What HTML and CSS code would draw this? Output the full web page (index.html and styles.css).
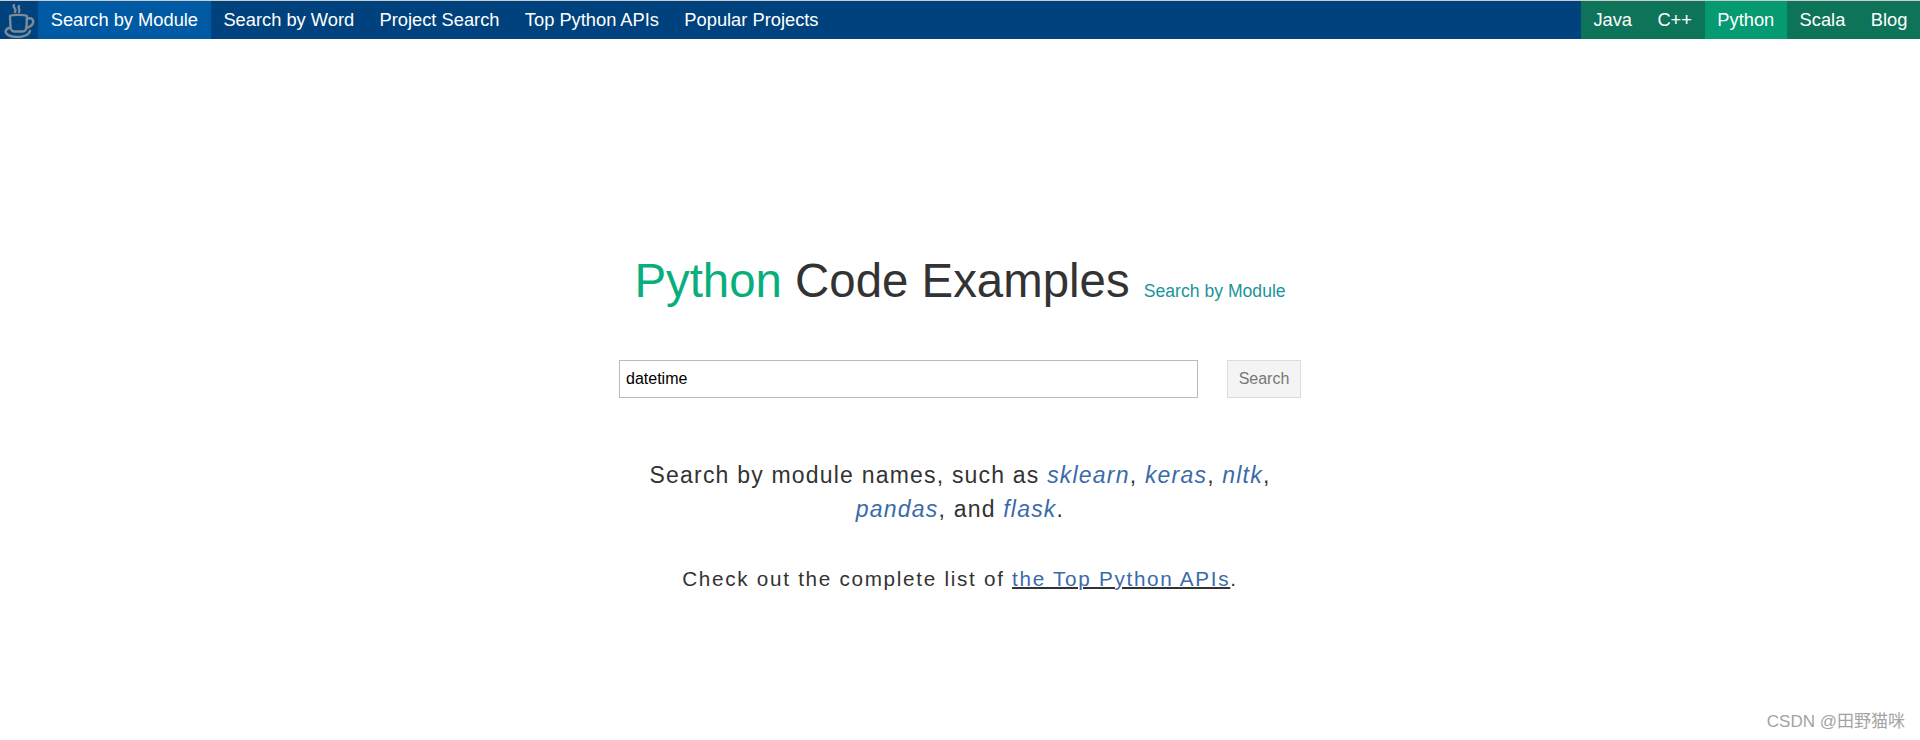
FILE: index.html
```html
<!DOCTYPE html>
<html>
<head>
    <title>Python Code Examples</title>
    <link rel="stylesheet" href="styles.css">
</head>
<body>
<div class="navbar">
    <a class="logo" href="#">
        <svg width="38" height="38" viewBox="0 0 38 38" fill="none" stroke="#7b8a96" stroke-width="2.4" stroke-linecap="round" stroke-linejoin="round">
            <path d="M14 4c-2 2 3 3 1 7M19 5c-2 2 2 3 0 6"/>
            <path d="M10 15c3-1.500 14-1.500 17 0l-.5 11c0 3-2 4.500-4 4.500h-8c-2 0-4-1.500-4-4.500z"/>
            <path d="M27 18c5-2 7 1 6 4s-3 4-7 5"/>
            <path d="M9 27c-3 1-4 3-3 5 2 3 7 4 12 4s11-2 12-6"/>
        </svg>
    </a>
    <ul class="nav-left">
        <li><a class="active" href="#">Search by Module</a></li>
        <li><a href="#">Search by Word</a></li>
        <li><a href="#">Project Search</a></li>
        <li><a href="#">Top Python APIs</a></li>
        <li><a href="#">Popular Projects</a></li>
    </ul>
    <ul class="nav-right">
        <li><a href="#">Java</a></li>
        <li><a href="#">C++</a></li>
        <li><a class="active" href="#">Python</a></li>
        <li><a href="#">Scala</a></li>
        <li><a href="#">Blog</a></li>
    </ul>
</div>
<div class="content">
    <h1><span class="lang">Python</span> Code Examples <small>Search by Module</small></h1>
    <form class="search-form">
        <input type="text" value="datetime">
        <button type="button">Search</button>
    </form>
    <p class="hint">Search by module names, such as <a href="#"><em>sklearn</em></a>, <a href="#"><em>keras</em></a>, <a href="#"><em>nltk</em></a>,<br><a href="#"><em>pandas</em></a>, and <a href="#"><em>flask</em></a>.</p>
    <p class="hint-small">Check out the complete list of <a href="#">the Top Python APIs</a>.</p>
</div>
<div class="watermark">CSDN @田野猫咪</div>
</body>
</html>
```

FILE: styles.css
```css
html, body {
    height: 100%;
}

body {
    font-family: "Liberation Sans", Arial, sans-serif;
    background-color: #fff;
    color: #333;
    margin: 0;
    padding: 0;
    overflow: hidden;
}

/* top bar */
.navbar {
    display: flex;
    height: 38px;
    background-color: #00427d;
    border-top: 1px solid #ccc;
}

.logo {
    display: block;
    width: 38px;
    height: 38px;
}

.navbar ul {
    display: flex;
    list-style-type: none;
    margin: 0;
    padding: 0;
}

.navbar ul a {
    display: block;
    padding: 0 12.7px;
    font-size: 18.3px;
    line-height: 38px;
    color: #fff;
    text-decoration: none;
}

.nav-left a.active {
    background-color: #0059a3;
}

.nav-right {
    margin-left: auto !important;
    background-color: #0d7359;
}

.nav-right a.active {
    background-color: #059a72;
}

/* main column */
.content {
    text-align: center;
    padding-top: 206px;
}

h1 {
    margin: 0;
    font-size: 47.4px;
    font-weight: normal;
    line-height: 72px;
    color: #333;
}

h1 .lang {
    color: #09ae7d;
}

h1 small {
    margin-left: 1px;
    font-size: 17.6px;
    color: #1a949c;
}

.search-form {
    display: flex;
    justify-content: center;
    gap: 29px;
    margin-top: 33px;
}

.search-form input {
    width: 579px;
    height: 38px;
    padding: 0 6px;
    box-sizing: border-box;
    border: 1px solid #bbb;
    font-family: inherit;
    font-size: 16px;
    color: #000;
    outline: none;
}

.search-form button {
    width: 74px;
    height: 38px;
    padding: 0;
    background-color: #f4f4f4;
    border: 1px solid #ddd;
    font-family: inherit;
    font-size: 16px;
    color: #777;
}

.hint {
    margin: 60px 0 0;
    font-size: 23px;
    line-height: 34px;
    letter-spacing: 1.2px;
    color: #333;
}

.hint a {
    color: #3a6aa8;
    text-decoration: none;
}

.hint-small {
    margin: 36px 0 0;
    font-size: 20.7px;
    line-height: 34px;
    letter-spacing: 1.7px;
    color: #333;
}

.hint-small a {
    color: #3a6aa8;
    text-decoration: underline;
    text-decoration-color: #333;
    text-decoration-thickness: 2px;
}

.watermark {
    position: absolute;
    right: 15px;
    bottom: 8px;
    font-family: "Liberation Sans", "Noto Sans CJK SC", sans-serif;
    font-size: 17px;
    color: #a3a3a3;
}
```
